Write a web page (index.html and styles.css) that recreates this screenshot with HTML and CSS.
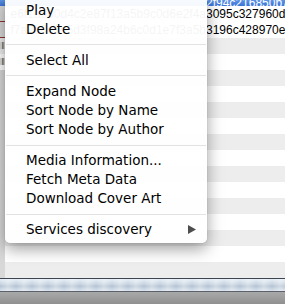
FILE: index.html
```html
<!DOCTYPE html>
<html lang="en">

    <head>
        <meta charset="UTF-8">
        <title>Playlist menu</title>
        <link rel="stylesheet" href="styles.css">
    </head>

    <body>
        <div class="window">
            <div class="list">
                <div class="row selected">
                    <span class="lead"></span>
                    <span class="name"></span>
                    <span class="hash">2f94c216850b7</span>
                </div>
                <div class="row plain">
                    <span class="lead mark"></span>
                    <span class="name"><span>e6f1a9b0d4c2e87f13a5b9c0d6e2f4a</span></span>
                    <span class="hash">3095c327960d4</span>
                </div>
                <div class="row plain">
                    <span class="lead mark"></span>
                    <span class="name"><span>f7a2b0c1e5d3f98a24b6c0d1e7f3a5b</span></span>
                    <span class="hash">3196c428970e5</span>
                </div>
                <div class="row odd"><span class="lead icon"></span></div>
                <div class="row even"><span class="lead icon"></span></div>
                <div class="row odd"><span class="lead"></span></div>
                <div class="row even"><span class="lead"></span></div>
                <div class="row odd"><span class="lead"></span></div>
                <div class="row even"><span class="lead"></span></div>
                <div class="row odd"><span class="lead"></span></div>
                <div class="row even"><span class="lead"></span></div>
                <div class="row odd"><span class="lead"></span></div>
                <div class="row even"><span class="lead"></span></div>
                <div class="row odd"><span class="lead"></span></div>
                <div class="row even"><span class="lead"></span></div>
                <div class="row odd"><span class="lead"></span></div>
                <div class="row even"><span class="lead"></span></div>
                <div class="row odd"><span class="lead"></span></div>
            </div>

            <div class="progress"></div>
            <div class="statusbar"></div>

            <ul class="menu">
                <li class="item">Play</li>
                <li class="item">Delete</li>
                <li class="sep"></li>
                <li class="item">Select All</li>
                <li class="sep"></li>
                <li class="item">Expand Node</li>
                <li class="item">Sort Node by Name</li>
                <li class="item">Sort Node by Author</li>
                <li class="sep"></li>
                <li class="item">Media Information...</li>
                <li class="item">Fetch Meta Data</li>
                <li class="item">Download Cover Art</li>
                <li class="sep"></li>
                <li class="item submenu">
                    Services discovery
                    <svg class="arrow" width="8" height="9" viewBox="0 0 8 9">
                        <polygon points="0,0 8,4.5 0,9" fill="#4d4d4d" />
                    </svg>
                </li>
            </ul>
        </div>
    </body>

</html>
```

FILE: styles.css
```css
* {
    margin: 0;
    padding: 0;
    box-sizing: border-box;
}

body {
    font-family: 'Liberation Sans', Arial, sans-serif;
    background-color: #fff;
    color: #000;
    overflow: hidden;
}

.window {
    position: relative;
    width: 285px;
    height: 304px;
    overflow: hidden;
}

.list {
    height: 278px;
    overflow: hidden;
}

.row {
    display: flex;
    height: 16px;
    font-size: 12px;
    line-height: 16px;
    white-space: nowrap;
}

.row.selected {
    height: 6px;
    line-height: 6px;
    align-items: flex-end;
    background: linear-gradient(#5d94e6, #3a74d6);
    color: #fff;
    overflow: hidden;
}

.row.plain {
    background-color: #fff;
}

.row.odd {
    background-color: #ededed;
}

.row.even {
    background-color: #fff;
}

.lead {
    flex: 0 0 5px;
    background-color: #d8d8d8;
}

.row.selected .lead {
    background-color: #3a74d6;
}

.lead.mark {
    border-bottom: 1px solid #8e3434;
}

.lead.icon {
    background: linear-gradient(90deg, #d8d8d8 2px, #4a7fc0 2px, #e2a54a 4px, #d8d8d8 4px);
    background-size: 5px 7px;
    background-repeat: no-repeat;
    background-position: 0 4px;
}

.name {
    flex: 0 0 201px;
    display: flex;
    justify-content: flex-end;
    overflow: hidden;
    color: #333;
}

.hash {
    flex: 1 0 auto;
}

.progress {
    height: 14px;
    border-top: 1px solid #3c4653;
    border-bottom: 1px solid #5b626b;
    background:
        repeating-linear-gradient(90deg, rgba(255, 255, 255, 0) 0, rgba(255, 255, 255, 0.35) 8px, rgba(255, 255, 255, 0) 16px),
        linear-gradient(#e6edf5, #c9d5e2 40%, #b3c2d3 60%, #dae3ed);
}

.statusbar {
    height: 12px;
    background: linear-gradient(#a9a9a9, #909090);
}

.menu {
    position: absolute;
    left: 5px;
    top: -3px;
    width: 202px;
    padding: 4px 0;
    list-style: none;
    background-color: rgba(255, 255, 255, 0.95);
    border-radius: 0 0 5px 5px;
    box-shadow: 0 6px 16px rgba(0, 0, 0, 0.38), 0 0 1px rgba(0, 0, 0, 0.3);
    font-family: 'DejaVu Sans', 'Lucida Grande', sans-serif;
    font-size: 13.5px;
    color: #000;
}

.item {
    height: 19px;
    line-height: 19px;
    padding-left: 21px;
    white-space: nowrap;
}

.item.submenu {
    display: flex;
    justify-content: space-between;
    align-items: center;
    padding-right: 11px;
}

.sep {
    height: 12px;
    margin: 0 1px;
    background: linear-gradient(transparent 5.5px, #e2e2e2 5.5px, #e2e2e2 6.5px, transparent 6.5px);
}
```
